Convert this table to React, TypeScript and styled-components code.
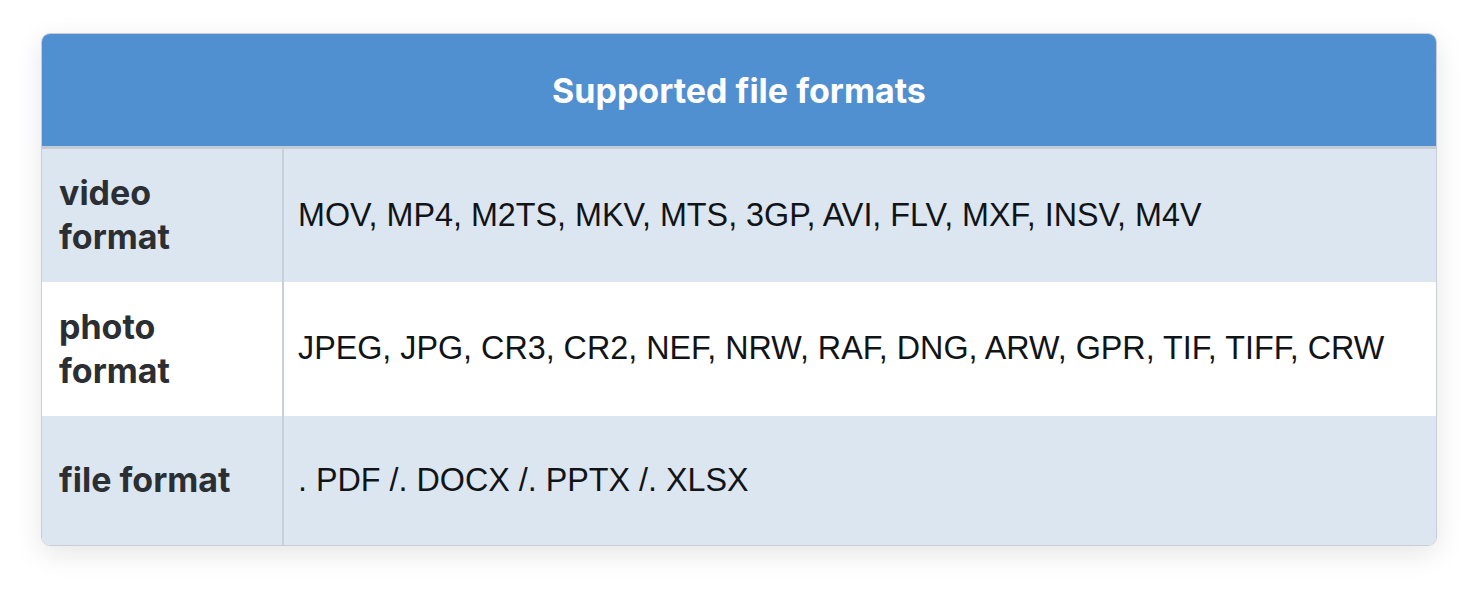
import React from "react";
import styled, { createGlobalStyle } from "styled-components";

const GlobalStyle = createGlobalStyle`
  html, body {
    margin: 0;
    padding: 0;
    background: #ffffff;
  }
`;

const Page = styled.div`
  width: 1480px;
  height: 596px;
  box-sizing: border-box;
  padding: 33px 43px 0 41px;
`;

const Card = styled.div`
  width: 1396px;
  border: 1px solid #c9ced5;
  border-radius: 9px;
  overflow: hidden;
  box-sizing: border-box;
  box-shadow: 0 8px 28px rgba(0, 0, 0, 0.1);
`;

const Table = styled.table`
  width: 100%;
  border-collapse: collapse;
  table-layout: fixed;
`;

const LabelCol = styled.col`
  width: 241px;
`;

const HeadCell = styled.th`
  height: 112px;
  background: #508fd0;
  color: #ffffff;
  font-family: Inter, "Liberation Sans", sans-serif;
  font-weight: 700;
  font-size: 34px;
  text-align: center;
  padding: 0;
  border-bottom: 3px solid #c3cbd6;
`;

const Row = styled.tr<{ $shaded?: boolean }>`
  background: ${(p) => (p.$shaded ? "#dce6f0" : "#ffffff")};
  & + & > td {
    border-top: 2px solid #cfd5dc;
  }
  &:last-child > td {
    height: 129px;
  }
`;

const Label = styled.td`
  height: 134px;
  box-sizing: border-box;
  padding: 0 40px 0 17px;
  border-right: 2px solid #c9cfd6;
  font-family: Inter, "Liberation Sans", sans-serif;
  font-weight: 700;
  font-size: 34px;
  line-height: 44px;
  color: #2b2f33;
  vertical-align: middle;
`;

const Value = styled.td`
  padding: 0 14px;
  font-family: "Liberation Sans", Arial, sans-serif;
  font-size: 32.3px;
  color: #111417;
  vertical-align: middle;
  white-space: nowrap;
`;

const rows = [
  { label: "video format", value: "MOV, MP4, M2TS, MKV, MTS, 3GP, AVI, FLV, MXF, INSV, M4V", shaded: true },
  { label: "photo format", value: "JPEG, JPG, CR3, CR2, NEF, NRW, RAF, DNG, ARW, GPR, TIF, TIFF, CRW", shaded: false },
  { label: "file format", value: ". PDF /. DOCX /. PPTX /. XLSX", shaded: true },
];

export default function App() {
  return (
    <Page>
      <GlobalStyle />
      <Card>
        <Table>
          <colgroup>
            <LabelCol />
            <col />
          </colgroup>
          <thead>
            <tr>
              <HeadCell colSpan={2}>Supported file formats</HeadCell>
            </tr>
          </thead>
          <tbody>
            {rows.map((r) => (
              <Row key={r.label} $shaded={r.shaded}>
                <Label>{r.label}</Label>
                <Value>{r.value}</Value>
              </Row>
            ))}
          </tbody>
        </Table>
      </Card>
    </Page>
  );
}
